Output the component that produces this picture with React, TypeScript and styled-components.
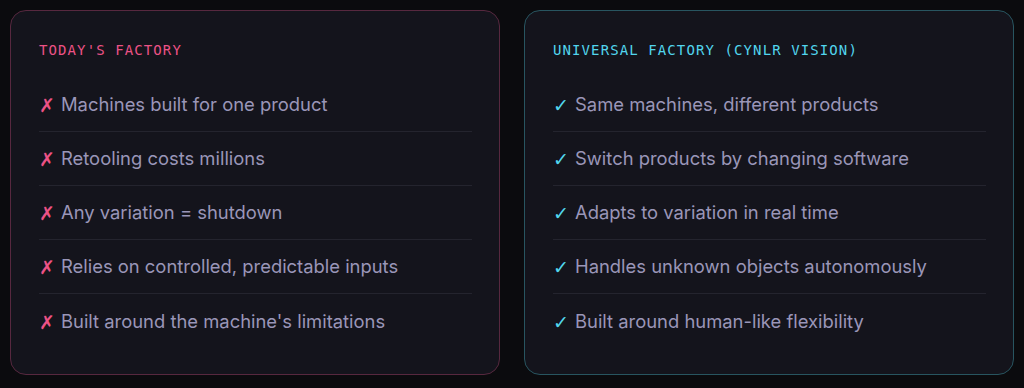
import styled, { createGlobalStyle } from "styled-components";

const GlobalStyle = createGlobalStyle`
	html, body {
		margin: 0;
		padding: 0;
		background: #0b0b0e;
	}
	* {
		box-sizing: border-box;
	}
`;

type Tone = "bad" | "good";

const palette = {
	bad: { accent: "#ec5286", border: "#57283f" },
	good: { accent: "#52d6ee", border: "#285560" },
};

const Page = styled.div`
	display: grid;
	grid-template-columns: 1fr 1fr;
	gap: 24px;
	padding: 10px;
	width: 1024px;
	height: 388px;
	font-family: Inter, "Noto Sans", sans-serif;
`;

const Card = styled.section<{ tone: Tone }>`
	background: #14141c;
	border: 1px solid ${(p) => palette[p.tone].border};
	border-radius: 16px;
	padding: 30px 27px 29px 28px;
	height: 365px;
`;

const Heading = styled.h2<{ tone: Tone }>`
	margin: 0 0 19px;
	font-family: "DejaVu Sans Mono", "Liberation Mono", monospace;
	font-size: 14px;
	line-height: 18px;
	font-weight: 400;
	letter-spacing: 1.1px;
	text-transform: uppercase;
	color: ${(p) => palette[p.tone].accent};
`;

const List = styled.ul`
	list-style: none;
	margin: 0;
	padding: 0;
`;

const Item = styled.li`
	display: flex;
	align-items: center;
	gap: 10px;
	height: 54px;
	padding-bottom: 1px;
	line-height: 24px;
	font-size: 18.4px;
	color: #9a96b8;
	border-bottom: 1px solid #24242e;
	&:last-child {
		border-bottom: none;
	}
`;

const Mark = styled.span<{ tone: Tone }>`
	width: 12px;
	line-height: 20px;
	transform: translateY(1px);
	font-family: "DejaVu Sans", sans-serif;
	font-size: 19px;
	font-weight: 700;
	color: ${(p) => palette[p.tone].accent};
`;

const columns: { tone: Tone; title: string; items: string[] }[] = [
	{
		tone: "bad",
		title: "Today's Factory",
		items: [
			"Machines built for one product",
			"Retooling costs millions",
			"Any variation = shutdown",
			"Relies on controlled, predictable inputs",
			"Built around the machine's limitations",
		],
	},
	{
		tone: "good",
		title: "Universal Factory (Cynlr Vision)",
		items: [
			"Same machines, different products",
			"Switch products by changing software",
			"Adapts to variation in real time",
			"Handles unknown objects autonomously",
			"Built around human-like flexibility",
		],
	},
];

export default function App() {
	return (
		<>
			<GlobalStyle />
			<Page>
				{columns.map((col) => (
					<Card key={col.title} tone={col.tone}>
						<Heading tone={col.tone}>{col.title}</Heading>
						<List>
							{col.items.map((text) => (
								<Item key={text}>
									<Mark tone={col.tone}>{col.tone === "bad" ? "✗" : "✓"}</Mark>
									{text}
								</Item>
							))}
						</List>
					</Card>
				))}
			</Page>
		</>
	);
}
